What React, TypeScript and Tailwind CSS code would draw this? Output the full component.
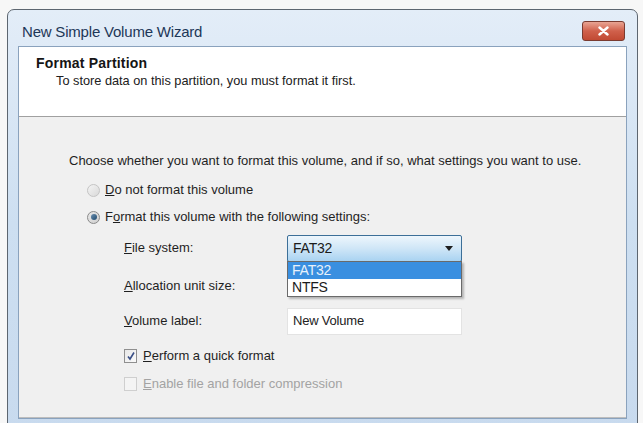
import React from "react";

const font = { fontFamily: '"Liberation Sans", Arial, sans-serif' };

function Radio({ checked, faded }: { checked?: boolean; faded?: boolean }) {
  return (
    <span
      className={`relative inline-flex h-[13px] w-[13px] shrink-0 items-center justify-center rounded-full border ${
        faded ? "border-[#c4c4c4] bg-gradient-to-br from-[#f4f4f4] to-[#d9d9d9]" : "border-[#8a8a8a] bg-gradient-to-br from-[#e9e9e9] to-[#cfcfcf]"
      }`}
    >
      {checked && (
        <span className="h-[6px] w-[6px] rounded-full bg-gradient-to-br from-[#6a8fb0] to-[#1f4a6e]" />
      )}
    </span>
  );
}

function Check({ checked, disabled }: { checked?: boolean; disabled?: boolean }) {
  return (
    <span
      className={`inline-flex h-[14px] w-[13px] shrink-0 items-center justify-center border ${
        disabled ? "border-[#cfcfcf] bg-[#f4f4f4]" : "border-[#8f8f8f] bg-gradient-to-br from-[#e8e8e8] to-[#fafafa]"
      }`}
    >
      {checked && (
        <svg width="10" height="10" viewBox="0 0 10 10">
          <path d="M2 5.5 L4 8 L8 1.5" fill="none" stroke="#3a4f86" strokeWidth="1.6" />
        </svg>
      )}
    </span>
  );
}

export default function App() {
  return (
    <div className="h-[423px] w-[643px] overflow-hidden bg-[#f7f7f7] pl-[7px] pt-[9px]" style={font}>
      <div className="flex h-[430px] w-[631px] flex-col rounded-t-[7px] border border-[#5d6670] bg-gradient-to-b from-[#e3edf8] via-[#cddff1] to-[#c8daee] px-[10px] pb-[5px]">
        {/* title bar */}
        <div className="flex h-[36px] shrink-0 items-center justify-between">
          <span className="pl-[4px] pt-[8px] text-[15px] tracking-[-0.2px] text-[#1d3757]">New Simple Volume Wizard</span>
          <div className="mr-[2px] mt-[5px] flex h-[20px] w-[43px] items-center justify-center rounded-[3px] border border-[#7a3b30] bg-gradient-to-b from-[#e8a493] via-[#d0604b] to-[#c14a33]">
            <svg width="11" height="10" viewBox="0 0 11 10">
              <path d="M1.5 1.5 L9.5 8.5 M9.5 1.5 L1.5 8.5" stroke="#ffffff" strokeWidth="2.4" strokeLinecap="round" />
            </svg>
          </div>
        </div>

        {/* client area */}
        <div className="flex h-[373px] shrink-0 flex-col border border-[#8aa2bd] bg-[#f0f0f0]">
          <div className="h-[70px] shrink-0 border-b border-[#a0a0a0] bg-white pl-[17px] pt-[8px]">
            <div className="text-[14px] font-bold leading-[17px] tracking-[0.2px] text-[#151515]">Format Partition</div>
            <div className="pl-[20px] pt-[1px] text-[12.75px] leading-[16px] text-[#202020]">
              To store data on this partition, you must format it first.
            </div>
          </div>

          <div className="flex flex-1 flex-col border-b border-[#bdbdbd] pl-[50px] text-[13px] text-[#1f1f1f]">
            <div className="pt-[36px] leading-[16px]">
              Choose whether you want to format this volume, and if so, what settings you want to use.
            </div>

            <div className="mt-[13px] flex items-center gap-[5px] pl-[18px] leading-[16px]">
              <Radio faded />
              <span>
                <span className="underline">D</span>o not format this volume
              </span>
            </div>
            <div className="mt-[11px] flex items-center gap-[5px] pl-[18px] leading-[16px]">
              <Radio checked />
              <span>
                F<span className="underline">o</span>rmat this volume with the following settings:
              </span>
            </div>

            <div className="mt-[9px] flex flex-col pl-[55px]">
              {/* file system */}
              <div className="flex h-[28px] items-center">
                <span className="w-[163px]">
                  <span className="underline">F</span>ile system:
                </span>
                <div className="relative">
                  <div className="flex h-[27px] w-[175px] items-center justify-between rounded-[2px] border border-[#3c6f98] bg-gradient-to-b from-[#eef6fc] via-[#cfe6f7] to-[#a9d3f1] pl-[5px] pr-[8px]">
                    <span className="text-[14px] tracking-[-0.2px] text-[#1b1b1b]">FAT32</span>
                    <svg width="8" height="5" viewBox="0 0 8 5">
                      <path d="M0 0 L8 0 L4 5 Z" fill="#1e1e1e" />
                    </svg>
                  </div>
                  {/* open list */}
                  <div className="absolute left-0 top-[26px] z-10 w-[175px] border border-[#6a6a6a] bg-white shadow-[2px_2px_2px_rgba(0,0,0,0.25)]">
                    <div className="flex h-[17px] items-center bg-[#3a8fe0] pl-[4px] text-[14px] tracking-[-0.2px] text-[#e8f1fb]">
                      FAT32
                    </div>
                    <div className="flex h-[17px] items-center pl-[4px] text-[14px] tracking-[-0.2px] text-[#1b1b1b]">
                      NTFS
                    </div>
                  </div>
                </div>
              </div>

              {/* allocation unit */}
              <div className="mt-[10px] flex h-[28px] items-center">
                <span className="w-[163px]">
                  <span className="underline">A</span>llocation unit size:
                </span>
                <div className="h-[27px] w-[175px]" />
              </div>

              {/* volume label */}
              <div className="mt-[7px] flex h-[28px] items-center">
                <span className="w-[163px]">
                  <span className="underline">V</span>olume label:
                </span>
                <div className="flex h-[27px] w-[175px] items-center border border-[#e3e3e3] bg-white pl-[5px] text-[13px] tracking-[-0.2px] text-[#222]">
                  New Volume
                </div>
              </div>

              <div className="mt-[13px] flex items-center gap-[6px] leading-[16px]">
                <Check checked />
                <span>
                  <span className="underline">P</span>erform a quick format
                </span>
              </div>
              <div className="mt-[12px] flex items-center gap-[6px] leading-[16px] text-[#a3a3a3]">
                <Check disabled />
                <span>
                  <span className="underline">E</span>nable file and folder compression
                </span>
              </div>
            </div>
          </div>
        </div>
      </div>
    </div>
  );
}
